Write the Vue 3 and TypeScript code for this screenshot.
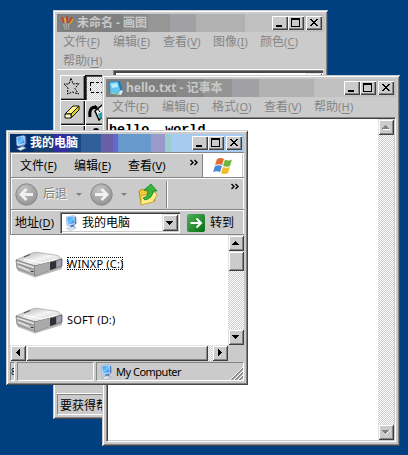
<script setup lang="ts">
interface MenuEntry { text: string; key: string; width: number }

const paintMenu: MenuEntry[] = [
  { text: '文件', key: 'F', width: 50 },
  { text: '编辑', key: 'E', width: 50 },
  { text: '查看', key: 'V', width: 50 },
  { text: '图像', key: 'I', width: 47 },
  { text: '颜色', key: 'C', width: 50 },
  { text: '帮助', key: 'H', width: 50 },
]
const noteMenu: MenuEntry[] = [
  { text: '文件', key: 'F', width: 50 },
  { text: '编辑', key: 'E', width: 50 },
  { text: '格式', key: 'O', width: 52 },
  { text: '查看', key: 'V', width: 50 },
  { text: '帮助', key: 'H', width: 50 },
]
const explorerMenu: MenuEntry[] = [
  { text: '文件', key: 'F', width: 54 },
  { text: '编辑', key: 'E', width: 54 },
  { text: '查看', key: 'V', width: 54 },
]
const drives = [
  { name: 'WINXP (C:)', focused: true },
  { name: 'SOFT (D:)', focused: false },
]
const controls = ['min', 'max', 'close']
</script>

<template>
  <div class="desktop">
    <svg class="defs" width="0" height="0" aria-hidden="true">
      <defs>
        <linearGradient id="screen" x1="0" y1="0" x2="1" y2="1">
          <stop offset="0" stop-color="#2f8df0" /><stop offset=".55" stop-color="#6cc8ff" /><stop offset="1" stop-color="#2060d8" />
        </linearGradient>
        <radialGradient id="disc" cx=".4" cy=".3" r=".75">
          <stop offset="0" stop-color="#c4c4c4" /><stop offset="1" stop-color="#929292" />
        </radialGradient>
        <linearGradient id="go" x1="0" y1="0" x2="1" y2="1">
          <stop offset="0" stop-color="#4fb05a" /><stop offset="1" stop-color="#067012" />
        </linearGradient>
        <linearGradient id="lid" x1="0" y1="0" x2="1" y2="1">
          <stop offset="0" stop-color="#a8a8a8" /><stop offset=".5" stop-color="#f4f4f4" /><stop offset="1" stop-color="#bdbdbd" />
        </linearGradient>
        <symbol id="pc" viewBox="0 0 14 17">
          <path d="M2 2 10 .5l1.500 1L12 9l-1.300 1.500L4 12 2.500 11z" fill="#c9def8" stroke="#7b9fd0" stroke-width=".5" />
          <path d="M3 3l6.600-1.300.7 6.800L4.200 10z" fill="url(#screen)" />
          <path d="M11 1.500l1.500 1 .3 6.500-2 1.500z" fill="#557cc0" />
          <path d="M6 11l4-1 1 3-4 1z" fill="#527ec4" />
          <path d="M2.500 14.500l6-2 4 1.300-6 2.700z" fill="#e5edf8" stroke="#8794a8" stroke-width=".5" />
        </symbol>
        <symbol id="drive" viewBox="0 0 48 28">
          <path d="M2 18l17 8 28-10v3L20 27.500 3 21z" fill="#8c8c8c" opacity=".6" />
          <path d="M1 10 17 3q2-1 5-.8L43 5.500l4 3.500-27 7z" fill="url(#lid)" stroke="#a2a2a2" stroke-width=".7" />
          <path d="M1 10l19 6v9.500L2 18.500z" fill="#b4b4b4" stroke="#6d6d6d" stroke-width=".7" />
          <path d="M20 16l27-7v7L20 25.500z" fill="#8b8b8b" stroke="#5d5d5d" stroke-width=".7" />
          <path d="M20 16l15-4v8.500l-15 5z" fill="#aaa" />
          <path d="M35 12.500l6-1.500v7l-6 2z" fill="#303030" />
          <path d="M42 11l4-1.100v5.600L42 17z" fill="#9da0b8" />
          <path d="M2 12l17 5.500M3 16l11 4.500" stroke="#f0f0f0" stroke-width="1.200" />
          <path d="M3 14l15 5.500" stroke="#777" stroke-width=".8" />
          <path d="M9 9l18 4 15-4" stroke="#fff" stroke-width="1.200" fill="none" />
          <path d="M9 7l6-2.500" stroke="#555" stroke-width="1.200" />
          <path d="M16 21.500h2.500" stroke="#333" />
        </symbol>
      </defs>
    </svg>

    <section class="window paint inactive">
      <header class="title">
        <svg class="app" viewBox="0 0 16 16">
          <path d="M3 8h9l-1 7.500H5z" fill="#97a8ad" stroke="#5f696c" stroke-width=".6" />
          <path d="M5 8 3 2M8 8V1M10 8l3-6" stroke="#c84323" stroke-width="1.800" />
          <path d="M6.500 8 6 3" stroke="#e8bd32" stroke-width="1.500" />
          <path d="M11 9l3-5" stroke="#d9a62b" stroke-width="1.400" />
          <path d="M6 9l1 6M8.500 9v6M11 9l-1 6" stroke="#dd6b28" />
        </svg>
        <span class="caption">未命名 - 画图</span>
        <div class="controls">
          <i v-for="c in controls" :key="c" class="control raised">
            <svg viewBox="0 0 14 12" shape-rendering="crispEdges">
              <path v-if="c === 'min'" d="M3 8h6v2H3z" />
              <path v-else-if="c === 'max'" fill-rule="evenodd" d="M2 1h9v9H2zM3 3v6h7V3z" />
              <path v-else d="M3 2h2v1h1v1h2V3h1V2h2v1h-1v1H9v1H8v1h1v1h1v1h1v1H9V8H8V7H6v1H5v1H3V8h1V7h1V6h1V5H5V4H4V3H3z" />
            </svg>
          </i>
        </div>
      </header>
      <nav class="menu wrap">
        <span v-for="m in paintMenu" :key="m.key" class="entry" :style="{ width: m.width + 'px' }">{{ m.text }}<b>(<u>{{ m.key }}</u>)</b></span>
      </nav>
      <div class="workspace">
        <div class="tools">
          <i class="tool">
            <svg viewBox="0 0 22 22"><path d="M10 2l2 6 6-.5-4 5 3.500 5.500-6-2-5 2 .5-6L3 8h5z" fill="none" stroke="#000" stroke-dasharray="2 1" /></svg>
          </i>
          <i class="tool pressed">
            <svg viewBox="0 0 22 22" shape-rendering="crispEdges"><path d="M4.500 6.500h14v10h-14z" fill="none" stroke="#000" stroke-dasharray="3 2" /></svg>
          </i>
          <i class="tool">
            <svg viewBox="0 0 22 22"><path d="M4 13 12 5h6l-8 8z" fill="#fff58a" stroke="#111" /><path d="M10 13l8-8v4l-8 8z" fill="#ded52b" stroke="#111" /><path d="M4 13h6v4H4z" fill="#fffdc8" stroke="#111" /></svg>
          </i>
          <i class="tool">
            <svg viewBox="0 0 22 22"><path d="M4 16c-1-8 2-11 7-9" fill="none" stroke="#000" stroke-width="3" /><path d="M9 10l7-6 5 7-8 8z" fill="#eee" stroke="#000" stroke-width="1.500" /><path d="M12 13l8-4 1 3-7 6z" fill="#12a9b6" /><path d="M9 4l5 7" stroke="#000" /></svg>
          </i>
          <i class="tool" />
          <i class="tool"><svg viewBox="0 0 22 22"><circle cx="10" cy="5" r="3" /></svg></i>
        </div>
        <div class="canvas"><i class="raised corner" /></div>
      </div>
      <footer class="hint"><span>要获得帮助</span></footer>
    </section>

    <section class="window note inactive">
      <header class="title">
        <svg class="app" viewBox="0 0 16 16">
          <path d="M2 2l10-1 3 11-4 3-9-1z" fill="#237bb1" />
          <path d="M1 2l9-1 3 10-3 3-8-1z" fill="#62c4ee" stroke="#1a6fae" stroke-width=".7" />
          <path d="M3 4l6-1 1 4-6 1z" fill="#b2edff" />
          <path d="M10 14l3-4 2 1-2 4z" fill="#e8edf1" />
          <path d="M2 13l9 1.500" stroke="#c7e29c" />
        </svg>
        <span class="caption">hello.txt - 记事本</span>
        <div class="controls">
          <i v-for="c in controls" :key="c" class="control raised">
            <svg viewBox="0 0 14 12" shape-rendering="crispEdges">
              <path v-if="c === 'min'" d="M3 8h6v2H3z" />
              <path v-else-if="c === 'max'" fill-rule="evenodd" d="M2 1h9v9H2zM3 3v6h7V3z" />
              <path v-else d="M3 2h2v1h1v1h2V3h1V2h2v1h-1v1H9v1H8v1h1v1h1v1h1v1H9V8H8V7H6v1H5v1H3V8h1V7h1V6h1V5H5V4H4V3H3z" />
            </svg>
          </i>
        </div>
      </header>
      <nav class="menu">
        <span v-for="m in noteMenu" :key="m.key" class="entry" :style="{ width: m.width + 'px' }">{{ m.text }}<b>(<u>{{ m.key }}</u>)</b></span>
      </nav>
      <div class="editor">
        <pre class="text">hello, world</pre>
        <div class="vbar dither">
          <i class="raised arrow"><svg viewBox="0 0 8 8" shape-rendering="crispEdges"><path d="M1 6h7v1H1z" fill="#fff" /><path d="M3 2h1v1h1v1h1v1h1v1H0V5h1V4h1V3h1z" fill="#808080" /></svg></i>
          <i class="raised arrow"><svg viewBox="0 0 8 8" shape-rendering="crispEdges"><path d="M7 2h1v1H7v1H6v1H5v1H4v1H3V6h1V5h1V4h1V3h1z" fill="#fff" /><path d="M0 2h7v1H6v1H5v1H4v1H3V5H2V4H1V3H0z" fill="#808080" /></svg></i>
        </div>
      </div>
    </section>

    <section class="window explorer">
      <header class="title">
        <svg class="app"><use href="#pc" /></svg>
        <span class="caption">我的电脑</span>
        <div class="controls">
          <i v-for="c in controls" :key="c" class="control raised">
            <svg viewBox="0 0 14 12" shape-rendering="crispEdges">
              <path v-if="c === 'min'" d="M3 8h6v2H3z" />
              <path v-else-if="c === 'max'" fill-rule="evenodd" d="M2 1h9v9H2zM3 3v6h7V3z" />
              <path v-else d="M3 2h2v1h1v1h2V3h1V2h2v1h-1v1H9v1H8v1h1v1h1v1h1v1H9V8H8V7H6v1H5v1H3V8h1V7h1V6h1V5H5V4H4V3H3z" />
            </svg>
          </i>
        </div>
      </header>

      <div class="bands">
        <div class="band menuband">
          <nav class="menu">
            <span v-for="m in explorerMenu" :key="m.key" class="entry" :style="{ width: m.width + 'px' }">{{ m.text }}<b>(<u>{{ m.key }}</u>)</b></span>
          </nav>
          <svg class="more" viewBox="0 0 8 5"><path d="M.5 0l2.500 2.500L.5 5M4.500 0 7 2.500 4.500 5" /></svg>
          <div class="flag">
            <svg viewBox="0 0 20 18">
              <path d="M4 2q4-2 7 0L9 8Q6 6.500 2 8z" fill="#e56b34" />
              <path d="M12 2.500q4 2 7 0L17 9q-3 1.500-7 0z" fill="#70b63c" />
              <path d="M2 9q4-1.500 7 0L7 15Q4 13.500 0 15z" fill="#4689d7" />
              <path d="M10 10q3 1.500 7 0l-2 6q-3 2-7 0z" fill="#f3bd29" />
            </svg>
          </div>
        </div>

        <div class="band toolbar">
          <svg class="disc" viewBox="0 0 23 23"><circle cx="11.500" cy="11.500" r="10.700" fill="url(#disc)" stroke="#888" /><path d="M18 11.500H6.500M11.500 6l-5.500 5.500 5.500 5.500" fill="none" stroke="#f1f1f1" stroke-width="2.800" /></svg>
          <span class="back">后退</span>
          <svg class="drop" viewBox="0 0 6 3"><path d="M0 0h6L3 3z" /></svg>
          <svg class="disc" viewBox="0 0 23 23"><circle cx="11.500" cy="11.500" r="10.700" fill="url(#disc)" stroke="#888" /><path d="M5 11.500h11.500M11.500 6l5.500 5.500-5.500 5.500" fill="none" stroke="#f1f1f1" stroke-width="2.800" /></svg>
          <svg class="drop second" viewBox="0 0 6 3"><path d="M0 0h6L3 3z" /></svg>
          <svg class="folder" viewBox="0 0 20 23">
            <path d="M1 8l4-2 2 2 9-1 1 11-14 3z" fill="#edc93b" stroke="#b98f1d" />
            <path d="M3 13l14-4 2 3-4 7-12 3z" fill="#ffed89" stroke="#d0a42b" />
            <path d="M5 15q5-1 5-8H6l7-6 6 7h-4q0 7-8 9z" fill="#37b63c" stroke="#168126" stroke-width=".8" />
          </svg>
          <i class="divider" />
          <svg class="more" viewBox="0 0 8 5"><path d="M.5 0l2.500 2.500L.5 5M4.500 0 7 2.500 4.500 5" /></svg>
        </div>

        <div class="band address">
          <span class="label">地址<b>(<u>D</u>)</b></span>
          <div class="combo">
            <svg class="pcicon"><use href="#pc" /></svg>
            <span>我的电脑</span>
            <i class="raised"><svg viewBox="0 0 8 8" shape-rendering="crispEdges"><path d="M0 2h7v1H6v1H5v1H4v1H3V5H2V4H1V3H0z" /></svg></i>
          </div>
          <svg class="go" viewBox="0 0 18 18"><rect width="18" height="18" rx="2" fill="url(#go)" /><path d="M3.500 9H14M9.500 4.500 14 9l-4.500 4.500" fill="none" stroke="#fff" stroke-width="2" /></svg>
          <span>转到</span>
        </div>
      </div>

      <div class="content">
        <div class="list">
          <div v-for="d in drives" :key="d.name" class="drive">
            <svg><use href="#drive" /></svg>
            <span class="name" :class="{ focused: d.focused }">{{ d.name }}</span>
          </div>
        </div>
        <div class="vbar dither">
          <div>
            <i class="raised arrow"><svg viewBox="0 0 8 8" shape-rendering="crispEdges"><path d="M3 2h1v1h1v1h1v1h1v1H0V5h1V4h1V3h1z" /></svg></i>
            <i class="raised thumb" />
          </div>
          <i class="raised arrow"><svg viewBox="0 0 8 8" shape-rendering="crispEdges"><path d="M0 2h7v1H6v1H5v1H4v1H3V5H2V4H1V3H0z" /></svg></i>
        </div>
      </div>
      <div class="hrow">
        <div class="hbar dither">
          <i class="raised arrow"><svg viewBox="0 0 8 8" shape-rendering="crispEdges"><path d="M5 0h1v7H5V6H4V5H3V4H2V3h1V2h1V1h1z" /></svg></i>
          <i class="raised thumb" />
          <i class="raised arrow last"><svg viewBox="0 0 8 8" shape-rendering="crispEdges"><path d="M2 0h1v1h1v1h1v1h1v1H5v1H4v1H3v1H2z" /></svg></i>
        </div>
      </div>
      <footer class="status">
        <span class="pane count">8</span>
        <span class="pane blank" />
        <span class="pane place">
          <svg class="pcicon"><use href="#pc" /></svg>
          <span>My Computer</span>
          <svg class="grip" viewBox="0 0 13 13"><path d="M1 13 13 1M5 13l8-8M9 13l4-4" stroke="#808080" stroke-width="1.800" /><path d="M0 13 13 0M4 13l9-9M8 13l5-5" stroke="#fff" /></svg>
        </span>
      </footer>
    </section>
  </div>
</template>

<style>
body { margin: 0; }
</style>

<style scoped>
* { box-sizing: border-box; }
.desktop {
  position: relative;
  width: 408px;
  height: 455px;
  overflow: hidden;
  background: #004080;
  color: #000;
  font: 12px/16px "Noto Sans", "Noto Sans CJK SC", sans-serif;
  white-space: nowrap;
}
.defs { position: absolute; }
svg { display: block; flex: none; }
i { display: block; flex: none; }
b { font-weight: 400; font-size: 11px; letter-spacing: .2px; }
u { text-underline-offset: 2px; text-decoration-thickness: 1px; }

.window {
  position: absolute;
  display: flex;
  flex-direction: column;
  padding: 4px;
  background: #cbcbcb;
  box-shadow: inset 1px 1px #cbcbcb, inset -1px -1px #484848, inset 2px 2px #fff, inset -2px -2px #848484;
}
.paint { left: 53px; top: 10px; width: 275px; height: 409px; }
.note { left: 102px; top: 75px; width: 298px; height: 371px; }
.explorer { left: 6px; top: 130px; width: 242px; height: 255px; }

.title {
  display: flex;
  flex: none;
  align-items: center;
  height: 18px;
  padding: 0 2px;
  color: #fff;
}
.inactive .title { color: #c8c8c8; }
.paint .title { background: linear-gradient(90deg, #808080 66px, #8b8b8b 66px 91px, #969696 91px 113px, #a0a0a5 113px 139px, #b1b1b1 139px 188px, #c0c0c0 188px); }
.note .title { background: linear-gradient(90deg, #808080 70px, #898989 70px 98px, #949494 98px 126px, #a0a0a5 126px 153px, #b1b1b1 153px 208px, #c0c0c0 208px); }
.explorer .title { background: linear-gradient(90deg, #05306c 24px, #16406f 24px 44px, #322fa0 44px 60px, #174586 60px 71px, #315f99 71px 91px, #6760a7 91px 103px, #6666cc 103px 108px, #6699cc 108px 141px, #9999cc 141px 155px, #99cccc 155px 161px, #a6caf0 161px); }
.app { width: 16px; height: 16px; }
.explorer .app { width: 14px; margin-left: 2px; }
.caption { margin-left: 2px; font-weight: 700; font-size: 12px; line-height: 18px; }
.controls { display: flex; margin-left: auto; }
.control { width: 16px; height: 14px; padding: 1px; }
.control svg { width: 14px; height: 12px; }
.control:last-child { margin-left: 2px; }

.raised {
  background: #cbcbcb;
  box-shadow: inset 1px 1px #e2e2e2, inset -1px -1px #404040, inset 2px 2px #fff, inset -2px -2px #858585;
}
.control.raised { box-shadow: inset 1px 1px #fff, inset -1px -1px #404040, inset -2px -2px #858585; }

.menu { display: flex; flex: none; height: 20px; padding-left: 6px; }
.menu.wrap { flex-wrap: wrap; height: 37px; }
.entry { flex: none; height: 18px; line-height: 19px; }
.inactive .menu { color: #858585; }

.workspace {
  display: flex;
  flex: none;
  height: 321px;
  border-top: 1px solid #fff;
}
.tools {
  display: grid;
  grid-template-columns: 25px 25px;
  grid-auto-rows: 25px;
  align-content: start;
  width: 56px;
  padding: 5px 0 0 3px;
}
.tool { width: 25px; height: 25px; padding: 1px; box-shadow: inset 1px 1px #fff, inset -1px -1px #111, inset -2px -2px #858585; }
.tool svg { width: 22px; height: 22px; }
.pressed { background: repeating-conic-gradient(#fff 0 25%, #cbcbcb 0 50%) 0 0 / 2px 2px; box-shadow: inset 1px 1px #111, inset 2px 2px #555; }
.canvas {
  display: flex;
  justify-content: flex-end;
  flex: 1;
  margin-right: 1px;
  background: #fff;
  border: solid #848484;
  border-width: 1px 0 0 1px;
  box-shadow: inset 2px 2px #484848;
}
.corner { width: 16px; height: 16px; margin: 2px 1px; }
.hint {
  flex: 1;
  margin-top: 3px;
  border-top: 1px solid #fff;
}
.hint span { display: block; height: 21px; padding: 1px 2px; line-height: 20px; border: 1px solid #858585; border-right-color: #fff; border-bottom-color: #fff; }

.editor {
  display: flex;
  flex: 1;
  min-height: 0;
  padding: 1px;
  background: #fff;
  border: 1px solid #858585;
  border-right-color: #fff;
  border-bottom-color: #fff;
  box-shadow: inset 1px 1px #404040, inset -1px -1px #cbcbcb;
}
.text { flex: 1; margin: 3px 0 0 1px; font: bold 13.4px/16px "Liberation Mono", monospace; }
.dither { background: repeating-conic-gradient(#fff 0 25%, #cbcbcb 0 50%) 0 0 / 2px 2px; }
.vbar { display: flex; flex-direction: column; justify-content: space-between; width: 16px; }
.arrow { display: flex; align-items: center; justify-content: center; width: 16px; height: 16px; }
.arrow svg { width: 8px; height: 8px; }

.bands { flex: none; height: 83px; border-top: 1px solid #858585; box-shadow: inset 1px 0 #858585, inset 2px 1px #fff, inset -1px 0 #fff; }
.band { display: flex; align-items: center; margin-left: 1px; border-bottom: 1px solid #858585; }
.menuband { height: 25px; }
.menuband .menu { width: 179px; height: 24px; padding: 3px 0 0 9px; }
.more { width: 8px; height: 5px; fill: none; stroke: #000; stroke-width: 1.400; overflow: visible; }
.menuband .more { margin-bottom: 6px; }
.flag { display: grid; place-items: center; width: 40px; height: 23px; margin: 1px 0 0 4px; background: #fff; border-left: 1px solid #858585; }
.flag svg { width: 20px; height: 18px; }
.toolbar { height: 32px; padding-left: 4px; border-top: 1px solid #fff; }
.disc { width: 23px; height: 23px; }
.back { width: 24px; margin-left: 5px; color: #808080; text-shadow: 1px 1px #fff; }
.drop { width: 6px; height: 3px; margin: 1px 8px 0 9px; fill: #808080; overflow: visible; }
.drop.second { margin: 1px 11px 0 8px; }
.folder { width: 20px; height: 23px; }
.divider { width: 2px; height: 27px; margin-left: 8px; background: linear-gradient(90deg, #858585 50%, #fff 0); }
.toolbar .more { margin: 0 0 15px 63px; }
.address { height: 25px; border-top: 1px solid #fff; padding-left: 4px; }
.label { width: 45px; }
.combo { display: flex; align-items: center; width: 120px; height: 21px; margin-right: 7px; padding: 2px 2px 2px 4px; background: #fff; box-shadow: inset 1px 1px #858585, inset 2px 2px #404040, inset -1px -1px #fff, inset -2px -2px #cbcbcb; }
.pcicon { width: 14px; height: 16px; margin-right: 4px; }
.combo .raised { display: grid; place-items: center; width: 16px; height: 17px; margin-left: auto; }
.combo .raised svg { width: 8px; height: 8px; }
.go { width: 18px; height: 18px; margin-right: 5px; }

.content { display: flex; flex: none; height: 110px; }
.list { flex: 1; padding-top: 1px; background: #fff; font: 11px/13px "Noto Sans", sans-serif; letter-spacing: .17px; }
.drive { display: flex; align-items: center; height: 56px; padding-left: 5px; }
.drive svg { width: 48px; height: 28px; margin-right: 4px; }
.name { margin-bottom: 2px; }
.focused { outline: 1px dotted #000; outline-offset: -1px; }
.vbar .thumb { width: 16px; height: 20px; }
.hrow { flex: none; height: 16px; padding-right: 16px; }
.hbar { display: flex; height: 16px; }
.hbar .thumb { width: 182px; height: 16px; }
.hbar .last { margin-left: auto; }
.status { display: flex; gap: 2px; height: 20px; padding-top: 1px; }
.pane { height: 19px; overflow: hidden; border: 1px solid #858585; border-right-color: #fff; border-bottom-color: #fff; }
.count { width: 5px; font-size: 9px; line-height: 17px; }
.blank { width: 77px; }
.place { display: flex; flex: 1; align-items: center; padding-left: 2px; font-size: 11px; letter-spacing: -.5px; }
.place .pcicon { margin-right: 3px; }
.grip { width: 13px; height: 13px; margin: 4px 0 0 auto; }
</style>
